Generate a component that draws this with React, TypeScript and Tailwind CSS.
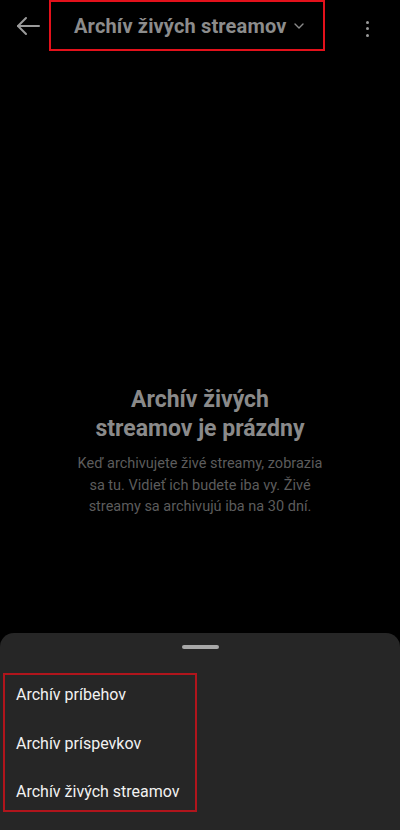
import React from "react";

function BackArrow() {
  return (
    <svg width="26" height="26" viewBox="0 0 26 26" fill="none" stroke="#9a9a9a" strokeWidth="2" strokeLinecap="round" strokeLinejoin="round">
      <path d="M24 13H3" />
      <path d="M11 5L3 13L11 21" />
    </svg>
  );
}

function Chevron() {
  return (
    <svg width="12" height="8" viewBox="0 0 12 8" fill="none" stroke="#8a8a8a" strokeWidth="1.4" strokeLinecap="round" strokeLinejoin="round">
      <path d="M2 2L6 6L10 2" />
    </svg>
  );
}

function Kebab() {
  return (
    <div className="flex flex-col items-center gap-[3.5px]">
      <span className="block w-[3px] h-[3px] rounded-full bg-[#9a9a9a]" />
      <span className="block w-[3px] h-[3px] rounded-full bg-[#9a9a9a]" />
      <span className="block w-[3px] h-[3px] rounded-full bg-[#9a9a9a]" />
    </div>
  );
}

export default function App() {
  const items = ["Archív príbehov", "Archív príspevkov", "Archív živých streamov"];
  return (
    <div
      className="w-[400px] h-[830px] bg-black flex flex-col overflow-hidden"
      style={{ fontFamily: "Roboto, 'Noto Sans', sans-serif" }}
    >
      {/* top bar */}
      <div className="h-[58px] flex items-start shrink-0">
        <div className="w-[49px] h-[51px] flex items-center pl-[15px]">
          <BackArrow />
        </div>
        <div className="w-[276px] h-[51px] border-2 border-[#e3111b] flex items-center pl-[23px] gap-[7px]">
          <span className="text-[20px] font-bold text-[#8c8c8c] tracking-[0.15px] leading-none">Archív živých streamov</span>
          <Chevron />
        </div>
        <div className="flex-1 h-[58px] flex items-center justify-end pr-[31px] pb-[1px]">
          <Kebab />
        </div>
      </div>

      {/* empty state */}
      <div className="flex-1 flex flex-col items-center pt-[327px]">
        <h1 className="text-[23px] font-bold text-[#8a8a8a] leading-[29px] text-center">
          Archív živých
          <br />
          streamov je prázdny
        </h1>
        <p className="mt-[10px] text-[14.5px] text-[#5c5c5c] leading-[21.5px] text-center">
          Keď archivujete živé streamy, zobrazia
          <br />
          sa tu. Vidieť ich budete iba vy. Živé
          <br />
          streamy sa archivujú iba na 30 dní.
        </p>
      </div>

      {/* bottom sheet */}
      <div className="h-[197px] shrink-0 bg-[#262626] rounded-t-[14px] flex flex-col">
        <div className="flex justify-center pt-[12px]">
          <div className="w-[37px] h-[4px] rounded-full bg-[#a8a8a8]" />
        </div>
        <div className="mt-[24px] ml-[3px] w-[194px] h-[139px] border-2 border-[#b0151c] flex flex-col gap-[8.5px]">
          {items.map((t) => (
            <div key={t} className="h-[40px] shrink-0 flex items-center pl-[11px]">
              <span className="text-[16px] text-[#f2f2f2] leading-none">{t}</span>
            </div>
          ))}
        </div>
      </div>
    </div>
  );
}
